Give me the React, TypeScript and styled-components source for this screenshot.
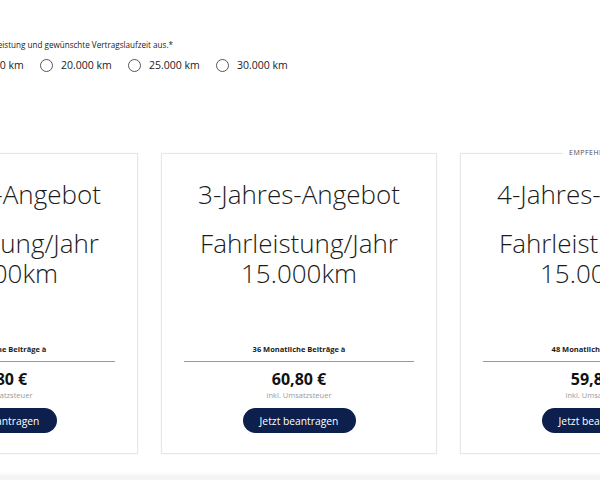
import styled, { createGlobalStyle } from "styled-components";

const GlobalStyle = createGlobalStyle`
  html, body { margin: 0; padding: 0; background: #fff; overflow: hidden; }
  body { font-family: "Open Sans", "Noto Sans", sans-serif; color: #1b1b1b; }
`;

const offers = [
  { years: 2, months: 24, price: "62,80 €", tag: "" },
  { years: 3, months: 36, price: "60,80 €", tag: "" },
  { years: 4, months: 48, price: "59,80 €", tag: "EMPFEHLUNG" },
];

const mileage = ["10.000 km", "15.000 km", "20.000 km", "25.000 km", "30.000 km"];

const App = () => {
  return (
    <Page>
      <GlobalStyle />
      <Content>
        <Intro>Bitte wählen Sie Ihre Fahrleistung und gewünschte Vertragslaufzeit aus.*</Intro>
        <RadioRow>
          {mileage.map((m) => (
            <RadioItem key={m}>
              <Circle />
              <span>{m}</span>
            </RadioItem>
          ))}
        </RadioRow>

        <Track>
          {offers.map((o) => (
            <Card key={o.years}>
              {o.tag && <Badge>{o.tag}</Badge>}
              <Title>{o.years}-Jahres-Angebot</Title>
              <Mileage>
                Fahrleistung/Jahr
                <br />
                15.000km
              </Mileage>
              <Spacer />
              <Rates>{o.months} Monatliche Beiträge à</Rates>
              <Divider />
              <Price>{o.price}</Price>
              <Tax>inkl. Umsatzsteuer</Tax>
              <Button>Jetzt beantragen</Button>
            </Card>
          ))}
        </Track>
      </Content>
      <Footer />
    </Page>
  );
};

const Page = styled.div`
  width: 600px;
  height: 480px;
  overflow: hidden;
  display: flex;
  flex-direction: column;
`;

const Content = styled.div`
  margin-left: -138px;
  padding-top: 39px;
  height: 425px;
`;

const Intro = styled.p`
  margin: 0;
  width: 311px;
  text-align: right;
  font-size: 8.1px;
  line-height: 12px;
  color: #222;
  white-space: nowrap;
`;

const RadioRow = styled.div`
  display: flex;
  margin-top: 7px;
  margin-left: 2px;
`;

const RadioItem = styled.label`
  display: flex;
  align-items: center;
  width: 88px;
  font-size: 10.5px;
  line-height: 14px;
  color: #222;
  white-space: nowrap;
`;

const Circle = styled.span`
  width: 11px;
  height: 11px;
  border: 1px solid #555;
  border-radius: 50%;
  margin-right: 8px;
  flex: none;
`;

const Track = styled.div`
  display: flex;
  gap: 23px;
  margin-top: 81px;
`;

const Card = styled.div`
  position: relative;
  flex: none;
  width: 276px;
  height: 301px;
  box-sizing: border-box;
  border: 1px solid #e6e6e6;
  box-shadow: 0 0 2px rgba(0, 0, 0, 0.04);
  padding: 25px 22px 20px;
  display: flex;
  flex-direction: column;
  align-items: center;
  text-align: center;
`;

const Badge = styled.span`
  position: absolute;
  top: -6px;
  left: 102px;
  padding: 0 6px;
  background: #fff;
  font-size: 7px;
  line-height: 10px;
  letter-spacing: 0.5px;
  color: #4a4a55;
`;

const Title = styled.h2`
  margin: 0;
  font-size: 26px;
  font-weight: 300;
  line-height: 30px;
  color: #1b1b1b;
  white-space: nowrap;
`;

const Mileage = styled.p`
  margin: 19px 0 0;
  font-size: 26px;
  font-weight: 300;
  line-height: 30px;
  color: #1b1b1b;
  white-space: nowrap;
`;

const Spacer = styled.div`
  flex: 1;
`;

const Rates = styled.p`
  margin: 0;
  font-size: 7.5px;
  font-weight: 700;
  line-height: 12px;
  color: #1b1b1b;
`;

const Divider = styled.hr`
  align-self: stretch;
  margin: 6px 0 0;
  border: none;
  border-top: 1px solid #9a9a9a;
`;

const Price = styled.p`
  margin: 6px 0 0;
  font-size: 16px;
  font-weight: 700;
  line-height: 22px;
  color: #111;
`;

const Tax = styled.p`
  margin: 0;
  font-size: 7.5px;
  line-height: 11px;
  color: #9a9a9a;
`;

const Button = styled.button`
  margin-top: 7px;
  height: 25px;
  width: 113px;
  border: none;
  border-radius: 13px;
  background: #0c1f4d;
  color: #fff;
  font-family: inherit;
  font-size: 10.3px;
  cursor: pointer;
`;

const Footer = styled.div`
  flex: 1;
  margin-top: 8px;
  background: linear-gradient(#fff, #f4f4f4 60%);
`;

export default App;
